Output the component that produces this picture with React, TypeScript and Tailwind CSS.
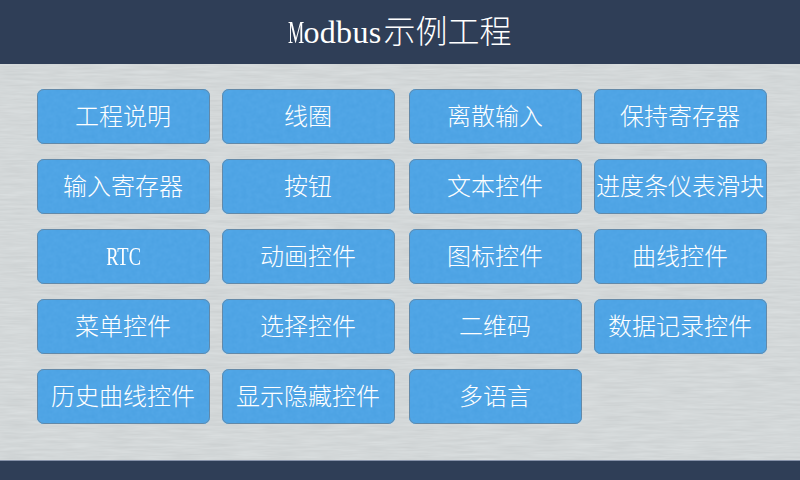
import React from "react";

const rows: string[][] = [
  ["工程说明", "线圈", "离散输入", "保持寄存器"],
  ["输入寄存器", "按钮", "文本控件", "进度条仪表滑块"],
  ["RTC", "动画控件", "图标控件", "曲线控件"],
  ["菜单控件", "选择控件", "二维码", "数据记录控件"],
  ["历史曲线控件", "显示隐藏控件", "多语言"],
];

// Fine horizontal grain of the brushed metal panel.
function BrushedMetal() {
  return (
    <svg className="absolute inset-0 h-full w-full" aria-hidden="true">
      <filter id="brushed" x="0" y="0" width="100%" height="100%" colorInterpolationFilters="sRGB">
        <feTurbulence type="fractalNoise" baseFrequency="0.03 0.4" numOctaves="3" seed="4" />
        <feColorMatrix values="0.07 0 0 0 0.793  0.07 0 0 0 0.81  0.07 0 0 0 0.814  0 0 0 0 1" />
      </filter>
      <rect width="100%" height="100%" filter="url(#brushed)" />
    </svg>
  );
}

// Faint mottling on the button face.
function ButtonGrain() {
  return (
    <svg className="absolute inset-0 h-full w-full" aria-hidden="true">
      <filter id="grain" x="0" y="0" width="100%" height="100%" colorInterpolationFilters="sRGB">
        <feTurbulence type="fractalNoise" baseFrequency="0.2" numOctaves="2" seed="8" />
        <feColorMatrix values="0.04 0 0 0 0.29  0.03 0 0 0 0.63  0.025 0 0 0 0.886  0 0 0 0 1" />
      </filter>
      <rect width="100%" height="100%" filter="url(#grain)" />
    </svg>
  );
}

function MenuButton({ label }: { label: string }) {
  return (
    <button className="relative flex h-[55px] w-[173px] items-center justify-center overflow-hidden rounded-[7px] bg-[#4fa4e5] text-2xl leading-none font-light text-white">
      <ButtonGrain />
      <span
        className={
          label === "RTC"
            ? "relative inline-block scale-x-[0.74] text-[25px] whitespace-nowrap"
            : "relative mr-px whitespace-nowrap"
        }
      >
        {label}
      </span>
      <span className="absolute inset-0 rounded-[7px] border border-[#6389a8]" />
    </button>
  );
}

export default function App() {
  return (
    <div className="flex h-[480px] w-[800px] flex-col overflow-hidden bg-[#d4d8da] font-['Liberation_Serif','Noto_Sans_CJK_SC',serif]">
      <header className="flex h-16 items-center justify-center bg-[#2f3e57] text-[32px] leading-none font-light text-white">
        <h1 className="mr-px whitespace-nowrap">
          <span className="-mr-[12.5px] inline-block origin-left scale-x-[0.57]">M</span>
          <span className="tracking-[0.3px]">odbus</span>
          <span className="ml-[2px]">示例工程</span>
        </h1>
      </header>
      <main className="relative h-[396px] pt-[25px] pl-[37px]">
        <BrushedMetal />
        <div className="relative flex flex-col gap-[15px]">
          {rows.map((row, i) => (
            <div key={i} className="grid grid-cols-[185px_187px_185px_173px]">
              {row.map((label) => (
                <MenuButton key={label} label={label} />
              ))}
            </div>
          ))}
        </div>
      </main>
      <footer className="h-5 border-t border-[#8792aa] bg-[#2f3e57]" />
    </div>
  );
}
